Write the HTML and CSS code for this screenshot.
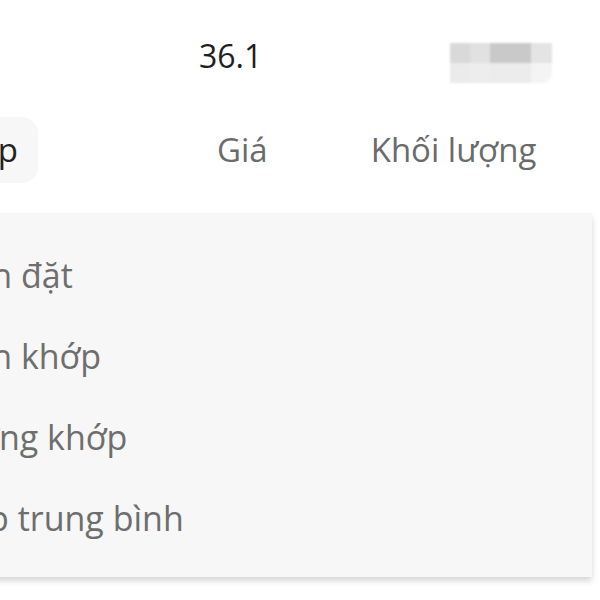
FILE: index.html
```html
<!DOCTYPE html>
<html lang="vi">
<head>
    <meta charset="UTF-8">
    <meta name="viewport" content="width=device-width, initial-scale=1.0">
    <title>Sổ lệnh</title>
    <link rel="stylesheet" href="styles.css">
</head>
<body>
    <div class="stats">
        <span class="stat-value">36.1</span>
        <div class="redacted">
            <span class="px c1"></span>
            <span class="px c2"></span>
            <span class="px c3"></span>
            <span class="px c4"></span>
            <span class="px c5"></span>
            <span class="px c6"></span>
            <span class="px c7"></span>
            <span class="px c8"></span>
        </div>
    </div>

    <div class="tabs">
        <div class="tab-slot">
            <span class="tab tab-active">Thời gian khớp</span>
        </div>
        <span class="tab tab-price">Giá</span>
        <span class="tab tab-volume">Khối lượng</span>
    </div>

    <ul class="sort-menu">
        <li>Thời gian đặt</li>
        <li>Thời gian khớp</li>
        <li>Khối lượng khớp</li>
        <li>Giá khớp trung bình</li>
    </ul>
</body>
</html>
```

FILE: styles.css
```css
html, body {
    margin: 0;
    padding: 0;
}
body {
    width: 600px;
    height: 600px;
    overflow: hidden;
    background-color: #fff;
    font-family: "Open Sans", "Noto Sans", sans-serif;
    font-size: 32px;
    line-height: 44px;
}
.stats {
    display: flex;
    align-items: flex-start;
    height: 117px;
    padding-top: 34px;
    box-sizing: border-box;
}
.stat-value {
    margin-left: 199px;
    color: #1f1f1f;
}
.redacted {
    display: grid;
    grid-template-columns: 20px 20px 41px 21px;
    grid-template-rows: 20px 20px;
    margin-top: 9px;
    margin-left: auto;
    margin-right: 48px;
    border-bottom-right-radius: 10px;
    overflow: hidden;
    filter: blur(0.8px);
}
.c1 { background-color: #d9d9d9; }
.c2 { background-color: #e1e1e1; }
.c3 { background-color: #c9c9c9; }
.c4 { background-color: #e4e4e4; }
.c5 { background-color: #ebebeb; }
.c6 { background-color: #ededed; }
.c7 { background-color: #ececec; }
.c8 { background-color: #f4f4f4; }
.tabs {
    display: flex;
    align-items: center;
    height: 66px;
    margin-bottom: 30px;
    font-size: 33px;
}
.tab-slot {
    width: 38px;
    height: 66px;
    display: flex;
    justify-content: flex-end;
    flex-shrink: 0;
}
.tab {
    color: #6b6b6b;
    white-space: nowrap;
}
.tab-active {
    display: flex;
    align-items: center;
    flex-shrink: 0;
    padding: 0 20px 0 24px;
    background-color: #f7f7f7;
    border-radius: 16px;
    color: #222;
}
.tab-price {
    margin-left: 179px;
}
.tab-volume {
    margin-left: 103px;
}
.sort-menu {
    list-style: none;
    width: 752px;
    margin: 0 0 0 -160px;
    padding: 21px 0 19px 27.5px;
    box-sizing: border-box;
    background-color: #f7f7f7;
    box-shadow: 0 4px 6px rgba(0, 0, 0, 0.16);
    font-size: 34px;
}
.sort-menu li {
    padding: 18.5px 0;
    color: #6e6e6e;
    white-space: nowrap;
}
```
